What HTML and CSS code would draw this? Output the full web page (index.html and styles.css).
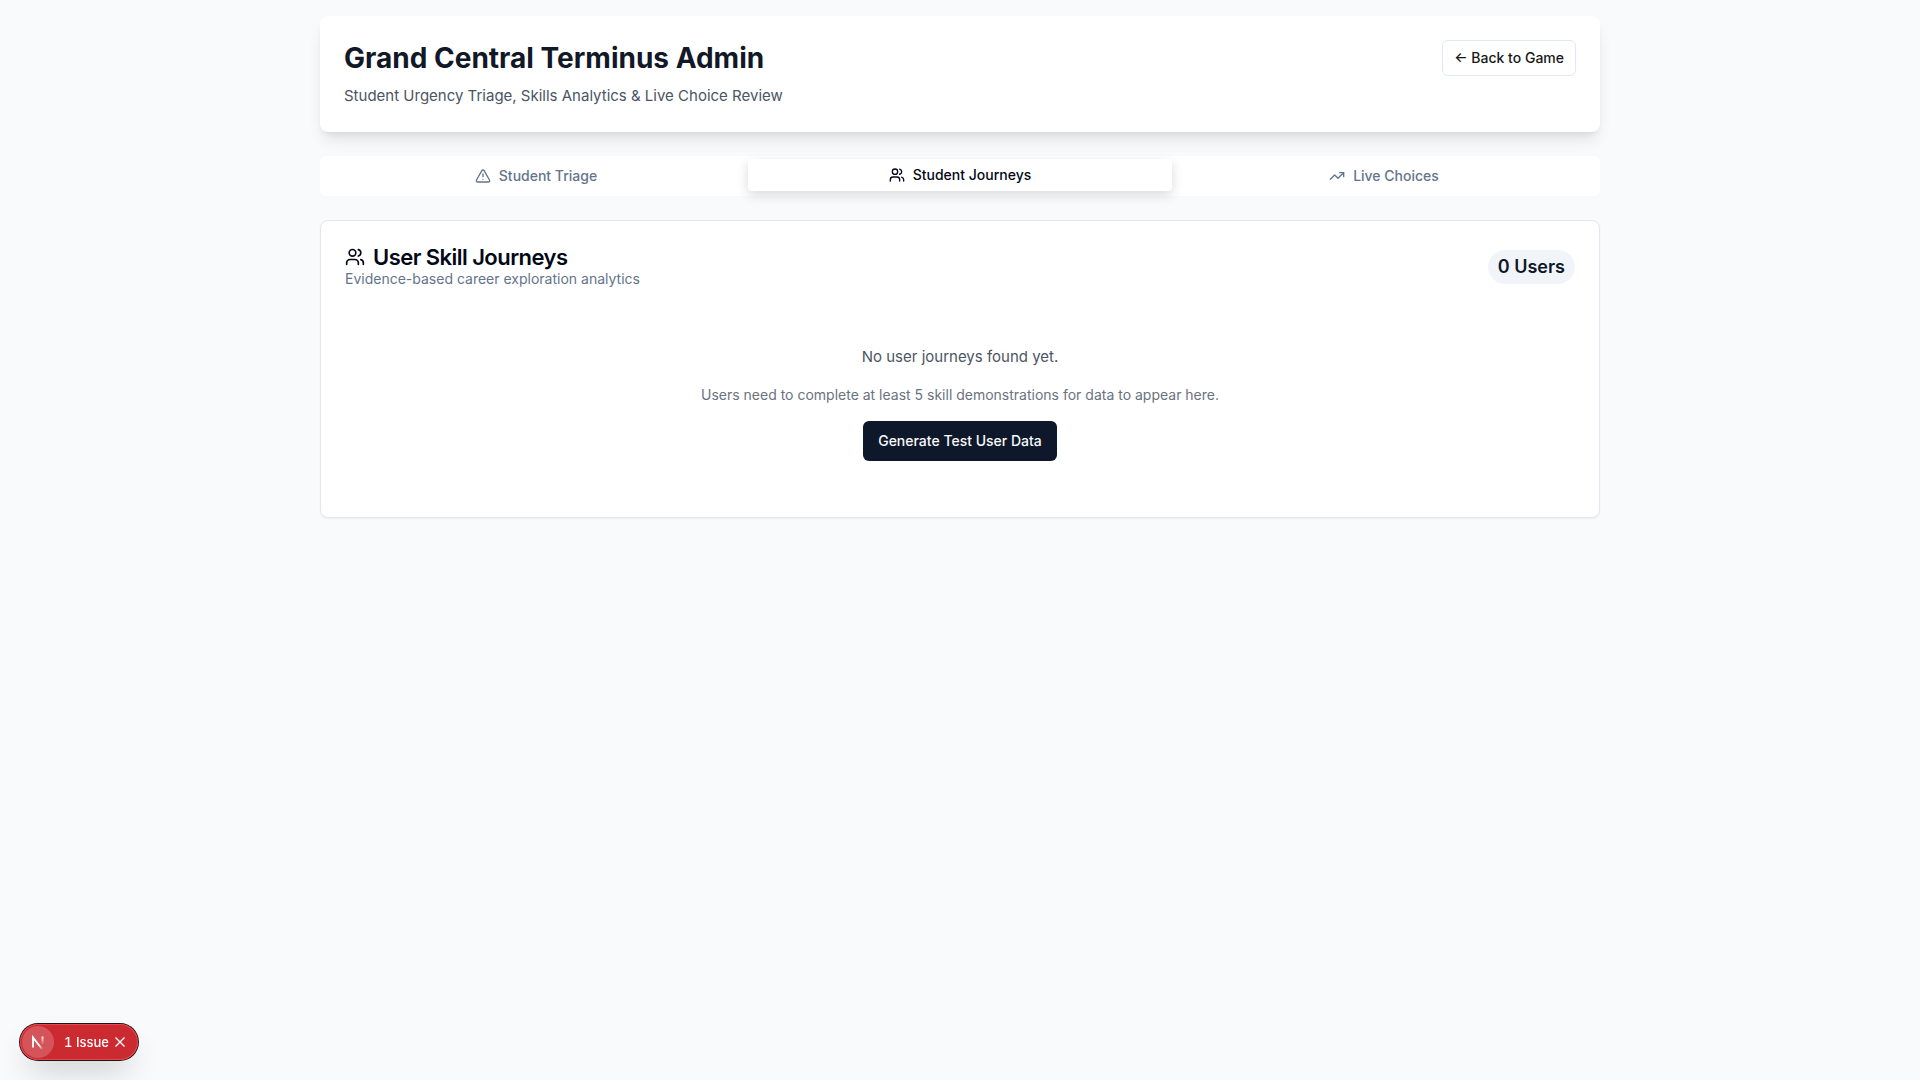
FILE: index.html
```html
<!DOCTYPE html>
<html lang="en">
<head>
<meta charset="utf-8">
<meta name="viewport" content="width=device-width, initial-scale=1">
<title>Grand Central Terminus Admin</title>
<link rel="stylesheet" href="styles.css">
</head>
<body>
<div class="container">
  <header class="page-header">
    <div>
      <h1 class="page-title">Grand Central Terminus Admin</h1>
      <p class="page-subtitle">Student Urgency Triage, Skills Analytics &amp; Live Choice Review</p>
    </div>
    <a class="back-link" href="#">← Back to Game</a>
  </header>

  <div class="tabs" role="tablist">
    <button class="tab" type="button" role="tab" aria-selected="false">
      <svg class="icon" viewBox="0 0 24 24" aria-hidden="true"><path d="m21.73 18-8-14a2 2 0 0 0-3.48 0l-8 14A2 2 0 0 0 4 21h16a2 2 0 0 0 1.73-3"/><path d="M12 9v4"/><path d="M12 17h.01"/></svg>
      Student Triage
    </button>
    <button class="tab tab-active" type="button" role="tab" aria-selected="true">
      <svg class="icon" viewBox="0 0 24 24" aria-hidden="true"><path d="M16 21v-2a4 4 0 0 0-4-4H6a4 4 0 0 0-4 4v2"/><circle cx="9" cy="7" r="4"/><path d="M22 21v-2a4 4 0 0 0-3-3.87"/><path d="M16 3.13a4 4 0 0 1 0 7.75"/></svg>
      Student Journeys
    </button>
    <button class="tab" type="button" role="tab" aria-selected="false">
      <svg class="icon" viewBox="0 0 24 24" aria-hidden="true"><path d="M16 7h6v6"/><path d="m22 7-8.5 8.5-5-5L2 17"/></svg>
      Live Choices
    </button>
  </div>

  <main class="card">
    <div class="card-header">
      <div>
        <h2 class="card-title">
          <svg class="icon icon-large" viewBox="0 0 24 24" aria-hidden="true"><path d="M16 21v-2a4 4 0 0 0-4-4H6a4 4 0 0 0-4 4v2"/><circle cx="9" cy="7" r="4"/><path d="M22 21v-2a4 4 0 0 0-3-3.87"/><path d="M16 3.13a4 4 0 0 1 0 7.75"/></svg>
          User Skill Journeys
        </h2>
        <p class="card-description">Evidence-based career exploration analytics</p>
      </div>
      <span class="badge">0 Users</span>
    </div>
    <div class="empty">
      <p class="empty-title">No user journeys found yet.</p>
      <p class="empty-hint">Users need to complete at least 5 skill demonstrations for data to appear here.</p>
      <button class="primary-button" type="button">Generate Test User Data</button>
    </div>
  </main>
</div>

<div class="dev-indicator">
  <button class="dev-logo" type="button" aria-label="Open developer tools">
    <svg width="32" height="32" viewBox="0 0 32 32" fill="none" aria-hidden="true">
      <defs>
        <linearGradient id="diagonal" x1="18" y1="18" x2="22" y2="23" gradientUnits="userSpaceOnUse"><stop stop-color="#fff"/><stop offset="1" stop-color="#fff" stop-opacity="0"/></linearGradient>
        <linearGradient id="stem" x1="20" y1="10" x2="20" y2="19" gradientUnits="userSpaceOnUse"><stop stop-color="#fff"/><stop offset="1" stop-color="#fff" stop-opacity="0"/></linearGradient>
      </defs>
      <path d="M11 21.500V11.500L20 23" stroke="url(#diagonal)" stroke-width="1.900"/>
      <path d="M20.500 10.500v8" stroke="url(#stem)" stroke-width="1.900"/>
    </svg>
  </button>
  <button class="dev-issues" type="button">1 Issue</button>
  <button class="dev-close" type="button" aria-label="Dismiss">
    <svg width="12" height="12" viewBox="0 0 12 12" aria-hidden="true"><path d="m1.500 1.500 9 9M10.500 1.500l-9 9" stroke="#fff" stroke-width="1.300" fill="none"/></svg>
  </button>
</div>
</body>
</html>
```
FILE: styles.css
```css
*,
*::before,
*::after {
  box-sizing: border-box;
}

body {
  margin: 0;
  min-height: 100vh;
  padding: 16px;
  background: #f9fafb;
  color: #020817;
  font-family: Inter, "Noto Sans", sans-serif;
  font-size: 15px;
  line-height: 24px;
}

h1,
h2,
p {
  margin: 0;
}

button {
  margin: 0;
  padding: 0;
  border: 0;
  background: none;
  color: inherit;
  font: inherit;
  cursor: pointer;
}

.container {
  display: flex;
  flex-direction: column;
  gap: 24px;
  max-width: 1280px;
  margin: 0 auto;
}

.page-header {
  display: flex;
  justify-content: space-between;
  align-items: flex-start;
  padding: 24px;
  border-radius: 8px;
  background: #fff;
  box-shadow: 0 10px 15px -3px rgb(0 0 0 / 10%), 0 4px 6px -4px rgb(0 0 0 / 10%);
}

.page-title {
  color: #111827;
  font-size: 28px;
  font-weight: 700;
  line-height: 36px;
}

.page-subtitle {
  margin-top: 8px;
  color: #4b5563;
}

.back-link {
  padding: 7px 11px;
  border: 1px solid #e2e8f0;
  border-radius: 6px;
  background: #fff;
  color: #171717;
  font-size: 14px;
  font-weight: 500;
  line-height: 20px;
  text-decoration: none;
}

.tabs {
  display: grid;
  grid-template-columns: repeat(3, 1fr);
  padding: 4px;
  border-radius: 6px;
  background: #fff;
}

.tab {
  display: flex;
  justify-content: center;
  align-items: center;
  gap: 8px;
  padding: 6px 12px;
  border-radius: 4px;
  color: #64748b;
  font-size: 14px;
  font-weight: 500;
  line-height: 20px;
}

.tab-active {
  background: #fff;
  color: #020817;
  box-shadow: 0 4px 12px rgb(0 0 0 / 15%);
  transform: translateY(-1px);
}

.icon {
  width: 16px;
  height: 16px;
  fill: none;
  stroke: currentColor;
  stroke-width: 2;
  stroke-linecap: round;
  stroke-linejoin: round;
}

.icon-large {
  width: 20px;
  height: 20px;
}

.card {
  padding: 24px;
  border: 1px solid #e2e8f0;
  border-radius: 8px;
  background: #fff;
  box-shadow: 0 1px 2px rgb(0 0 0 / 5%);
}

.card-header {
  display: flex;
  justify-content: space-between;
  align-items: center;
}

.card-title {
  display: flex;
  align-items: center;
  gap: 8px;
  font-size: 22px;
  font-weight: 600;
  line-height: 24px;
  letter-spacing: -0.025em;
}

.card-description {
  color: #64748b;
  font-size: 14px;
  line-height: 20px;
}

.badge {
  padding: 3px 10px;
  border-radius: 17px;
  background: #f1f5f9;
  color: #0f172a;
  font-size: 18px;
  font-weight: 600;
  line-height: 28px;
}

.empty {
  display: flex;
  flex-direction: column;
  align-items: center;
  gap: 16px;
  margin-top: 24px;
  padding: 32px 0;
  text-align: center;
}

.empty-title {
  color: #4b5563;
}

.empty-hint {
  color: #6b7280;
  font-size: 14px;
  line-height: 20px;
}

.primary-button {
  padding: 10px 15px;
  border-radius: 6px;
  background: #0f172a;
  color: #f8fafc;
  font-size: 14px;
  font-weight: 500;
  line-height: 20px;
}

.dev-indicator {
  position: fixed;
  bottom: 20px;
  left: 20px;
  display: flex;
  align-items: center;
  height: 36px;
  padding: 2px;
  border-radius: 18px;
  background: #ca2a30;
  box-shadow: 0 0 0 1px #171717, inset 0 0 0 1px #e5484d, 0 16px 32px -8px rgb(0 0 0 / 24%);
  color: #fff;
}

.dev-logo {
  display: flex;
  width: 32px;
  height: 32px;
  border-radius: 50%;
  background: rgb(255 255 255 / 20%);
}

.dev-issues {
  padding-left: 10px;
  font-size: 13px;
  font-weight: 500;
  font-variant-numeric: tabular-nums;
  line-height: 32px;
}

.dev-close {
  display: flex;
  padding: 0 10px 0 5px;
}
```
